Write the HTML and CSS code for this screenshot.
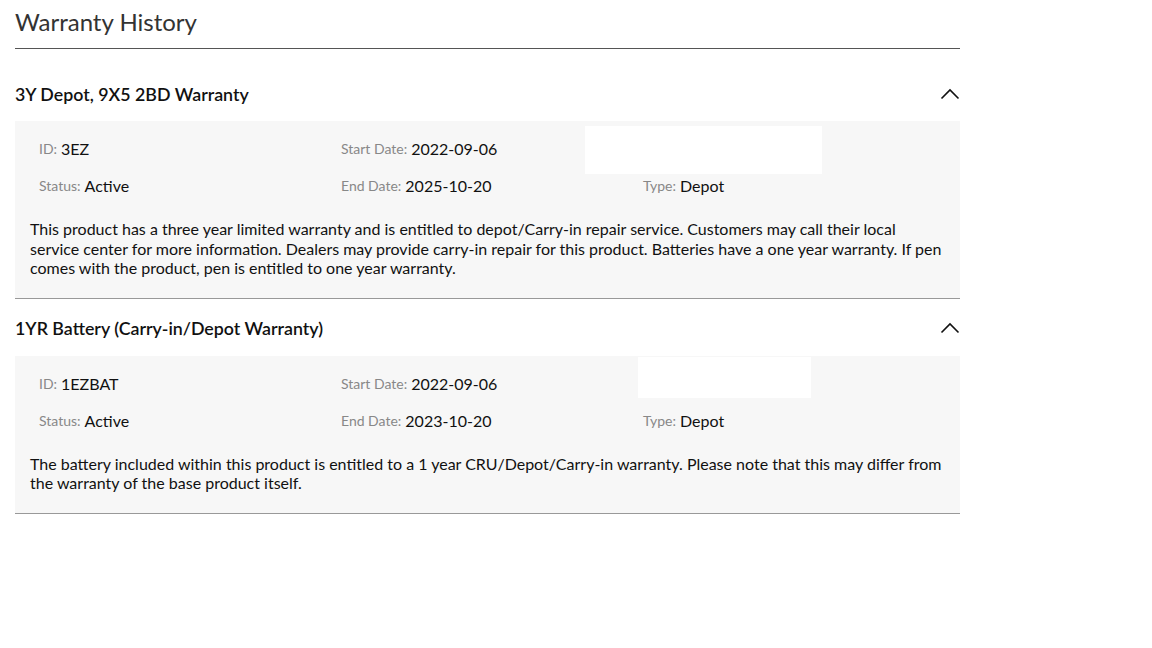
FILE: index.html
```html
<!DOCTYPE html>
<html lang="en">
<head>
<meta charset="utf-8">
<title>Warranty History</title>
<link rel="stylesheet" href="styles.css">
</head>
<body>
<div class="page">
  <h1 class="title">Warranty History</h1>
  <div class="list">
    <section class="item first">
      <div class="item-head">
        <h2 class="item-name">3Y Depot, 9X5 2BD Warranty</h2>
        <svg class="chev" width="20" height="12" viewBox="0 0 20 12"><polyline points="1.5,10.5 10,2 18.5,10.5" fill="none" stroke="#111" stroke-width="1.6"/></svg>
      </div>
      <div class="panel">
        <div class="redact r1"></div>
        <div class="grid">
          <div class="cell"><span class="lbl">ID:</span> <span class="val">3EZ</span></div>
          <div class="cell"><span class="lbl">Start Date:</span> <span class="val">2022-09-06</span></div>
          <div class="cell"></div>
          <div class="cell"><span class="lbl">Status:</span> <span class="val">Active</span></div>
          <div class="cell"><span class="lbl">End Date:</span> <span class="val">2025-10-20</span></div>
          <div class="cell"><span class="lbl">Type:</span> <span class="val">Depot</span></div>
        </div>
        <p class="desc">This product has a three year limited warranty and is entitled to depot/Carry-in repair service. Customers may call their local service center for more information. Dealers may provide carry-in repair for this product. Batteries have a one year warranty. If pen comes with the product, pen is entitled to one year warranty.</p>
      </div>
    </section>
    <section class="item">
      <div class="item-head">
        <h2 class="item-name">1YR Battery (Carry-in/Depot Warranty)</h2>
        <svg class="chev" width="20" height="12" viewBox="0 0 20 12"><polyline points="1.5,10.5 10,2 18.5,10.5" fill="none" stroke="#111" stroke-width="1.6"/></svg>
      </div>
      <div class="panel">
        <div class="redact r2"></div>
        <div class="grid">
          <div class="cell"><span class="lbl">ID:</span> <span class="val">1EZBAT</span></div>
          <div class="cell"><span class="lbl">Start Date:</span> <span class="val">2022-09-06</span></div>
          <div class="cell"></div>
          <div class="cell"><span class="lbl">Status:</span> <span class="val">Active</span></div>
          <div class="cell"><span class="lbl">End Date:</span> <span class="val">2023-10-20</span></div>
          <div class="cell"><span class="lbl">Type:</span> <span class="val">Depot</span></div>
        </div>
        <p class="desc">The battery included within this product is entitled to a 1 year CRU/Depot/Carry-in warranty. Please note that this may differ from the warranty of the base product itself.</p>
      </div>
    </section>
  </div>
</div>
</body>
</html>
```

FILE: styles.css
```css
html, body {
  margin: 0;
  padding: 0;
  background: #fff;
}
body {
  font-family: Lato, "Open Sans", sans-serif;
  color: #111;
}
.page {
  width: 945px;
  padding: 0 0 0 15px;
}
.title {
  margin: 0;
  font-size: 24px;
  font-weight: 400;
  color: #333;
  line-height: 44px;
  height: 48px;
  border-bottom: 1px solid #555;
  box-sizing: content-box;
}
.list {
  padding-top: 15px;
}
.item {
  border-bottom: 1px solid #999;
}
.item-head {
  display: flex;
  align-items: center;
  justify-content: space-between;
  height: 56px;
  padding-top: 1px;
}
.item.first .item-head {
  height: 54px;
  padding-top: 3px;
}
.item-name {
  margin: 0;
  font-size: 17.8px;
  font-weight: 600;
  color: #111;
}
.chev {
  display: block;
}
.panel {
  position: relative;
  background: #f7f7f7;
  padding: 9px 15px 20px;
}
.redact {
  position: absolute;
  background: #fff;
}
.r1 {
  left: 570px;
  top: 5px;
  width: 237px;
  height: 48px;
}
.r2 {
  left: 623px;
  top: 1px;
  width: 173px;
  height: 41px;
}
.grid {
  position: relative;
  display: grid;
  grid-template-columns: 302px 302px 302px;
  grid-auto-rows: 37px;
  padding-left: 9px;
}
.cell {
  display: flex;
  align-items: center;
  gap: 4px;
  white-space: nowrap;
}
.lbl {
  font-size: 14px;
  color: #888;
}
.val {
  font-size: 16px;
  color: #111;
}
.desc {
  margin: 15px 0 0;
  font-size: 16px;
  line-height: 19.5px;
  color: #111;
}
```
